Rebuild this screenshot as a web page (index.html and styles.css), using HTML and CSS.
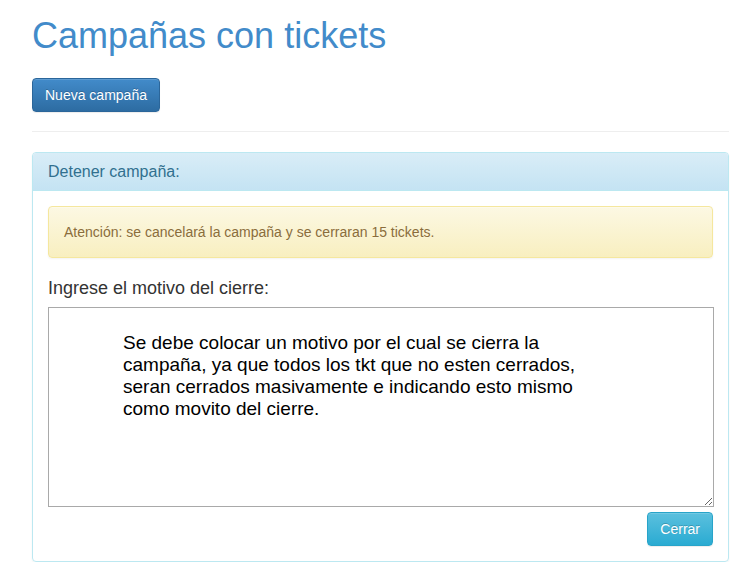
FILE: index.html
```html
<!DOCTYPE html>
<html lang="es">
<head>
<meta charset="utf-8">
<title>Campañas con tickets</title>
<link rel="stylesheet" href="styles.css">
</head>
<body>
<div class="page">
  <h1 class="title">Campañas con tickets</h1>
  <button class="btn btn-primary">Nueva campaña</button>
  <hr class="divider">
  <div class="panel">
    <div class="panel-heading">Detener campaña:</div>
    <div class="panel-body">
      <div class="alert">Atención: se cancelará la campaña y se cerraran 15 tickets.</div>
      <label class="field-label" for="motivo">Ingrese el motivo del cierre:</label>
      <textarea id="motivo" class="motivo">Se debe colocar un motivo por el cual se cierra la
campaña, ya que todos los tkt que no esten cerrados,
seran cerrados masivamente e indicando esto mismo
como movito del cierre.</textarea>
      <div class="actions">
        <button class="btn btn-info">Cerrar</button>
      </div>
    </div>
  </div>
</div>
</body>
</html>
```
FILE: styles.css
```css
html, body {
  margin: 0;
  padding: 0;
  background: #fff;
}
body {
  font-family: "Liberation Sans", Arial, sans-serif;
  font-size: 14px;
  line-height: 1.42857;
  color: #333;
}
.page {
  width: 697px;
  padding-left: 32px;
}
.title {
  margin: 16px 0 22px;
  font-size: 36px;
  font-weight: normal;
  line-height: 1.1;
  color: #428bca;
}
.btn {
  display: inline-block;
  font-family: "Liberation Sans", Arial, sans-serif;
  font-size: 14px;
  line-height: 20px;
  padding: 6px 12px;
  border: 1px solid transparent;
  border-radius: 4px;
  color: #fff;
  text-shadow: 0 -1px 0 rgba(0,0,0,.2);
  box-shadow: inset 0 1px 0 rgba(255,255,255,.15), 0 1px 1px rgba(0,0,0,.075);
  cursor: pointer;
}
.btn-primary {
  background: linear-gradient(to bottom, #428bca 0%, #2d6ca2 100%);
  border-color: #2b669a;
}
.btn-info {
  background: linear-gradient(to bottom, #5bc0de 0%, #2aabd2 100%);
  border-color: #28a4c9;
}
.divider {
  margin: 19px 0 20px;
  border: 0;
  border-top: 1px solid #eee;
  height: 0;
}
.panel {
  border: 1px solid #bce8f1;
  border-radius: 4px;
  box-shadow: 0 1px 2px rgba(0,0,0,.05);
}
.panel-heading {
  padding: 10px 15px;
  font-size: 16px;
  line-height: 1.1;
  color: #31708f;
  background: linear-gradient(to bottom, #d9edf7 0%, #c4e3f3 100%);
  border-bottom: 1px solid #bce8f1;
  border-radius: 3px 3px 0 0;
}
.panel-body {
  padding: 15px;
}
.alert {
  padding: 15px;
  border: 1px solid #f5e79e;
  border-radius: 4px;
  background: linear-gradient(to bottom, #fcf8e3 0%, #f8efc0 100%);
  color: #8a6d3b;
  font-size: 14px;
  line-height: 20px;
  text-shadow: 0 1px 0 rgba(255,255,255,.2);
  box-shadow: inset 0 1px 0 rgba(255,255,255,.25), 0 1px 2px rgba(0,0,0,.05);
  margin-bottom: 17px;
}
.field-label {
  display: block;
  font-size: 18px;
  line-height: 26px;
  color: #333;
  margin-bottom: 6px;
}
.motivo {
  display: block;
  box-sizing: border-box;
  width: 666px;
  height: 200px;
  margin: 0;
  padding: 24px 20px 2px 74px;
  border: 1px solid #a9a9a9;
  font-family: "Liberation Sans", Arial, sans-serif;
  font-size: 19px;
  line-height: normal;
  color: #000;
  background: #fff;
}
.actions {
  display: flex;
  justify-content: flex-end;
  margin-top: 5px;
}
```
